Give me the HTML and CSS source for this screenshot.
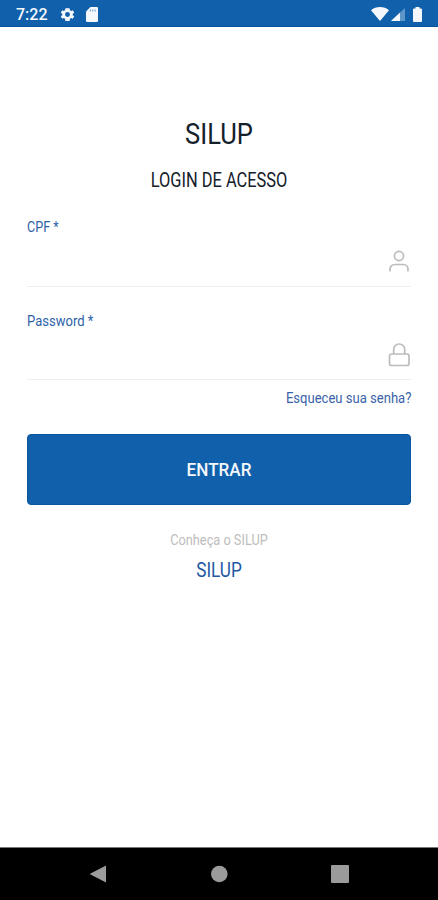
FILE: index.html
```html
<!DOCTYPE html>
<html lang="pt-BR">
<head>
  <meta charset="UTF-8">
  <meta name="viewport" content="width=device-width, initial-scale=1.0">
  <title>SILUP</title>
  <link rel="stylesheet" href="styles.css">
</head>
<body>
  <header class="status-bar">
    <span class="clock">7:22</span>
    <svg class="gear" width="17" height="17" viewBox="0 0 24 24">
      <path fill-rule="evenodd" d="M19.400 13a7.600 7.600 0 0 0 0-2l2.100-1.600-2-3.500-2.500 1a7.600 7.600 0 0 0-1.700-1L15 3H9l-.4 2.900a7.600 7.600 0 0 0-1.700 1l-2.400-1-2 3.500L4.600 11a7.600 7.600 0 0 0 0 2l-2.100 1.600 2 3.500 2.400-1a7.600 7.600 0 0 0 1.700 1L9 21h6l.4-2.900a7.600 7.600 0 0 0 1.700-1l2.400 1 2-3.500zM12 8.500a3.500 3.500 0 1 1 0 7 3.500 3.500 0 0 1 0-7z"/>
    </svg>
    <svg class="sd-card" width="12" height="15" viewBox="0 0 12 15">
      <path d="M4.500 0H11a1 1 0 0 1 1 1v13a1 1 0 0 1-1 1H1a1 1 0 0 1-1-1V4.500z"/>
      <path class="slots" d="M4.500 2.500v2M6.800 2.500v2M9.100 2.500v2"/>
    </svg>
    <div class="status-right">
      <svg width="18" height="14" viewBox="0 0 18 14"><path d="M0 3.200C5-1 13-1 18 3.200L9 14z"/></svg>
      <svg width="14" height="13" viewBox="0 0 14 13">
        <path opacity=".35" d="M14 0v13H0z"/>
        <path d="M9 4.600V13H0z"/>
      </svg>
      <svg class="battery" width="9" height="15" viewBox="0 0 9 15"><path d="M2.500 0h4v1.500H8a1 1 0 0 1 1 1V14a1 1 0 0 1-1 1H1a1 1 0 0 1-1-1V2.500a1 1 0 0 1 1-1h1.500z"/></svg>
    </div>
  </header>

  <main class="login">
    <h1 class="title">SILUP</h1>
    <h2 class="subtitle">LOGIN DE ACESSO</h2>

    <form>
      <div class="field">
        <label class="label-cpf" for="cpf">CPF *</label>
        <div class="input-row">
          <input type="text" id="cpf">
          <svg width="22" height="24" viewBox="0 0 22 24">
            <circle cx="11" cy="6" r="4.600"/>
            <path d="M2 21.500V19a4.500 4.500 0 0 1 4.500-4.500h9A4.500 4.500 0 0 1 20 19v2.500"/>
          </svg>
        </div>
      </div>
      <div class="field field-password">
        <label class="label-password" for="password">Password *</label>
        <div class="input-row">
          <input type="password" id="password">
          <svg width="22" height="24" viewBox="0 0 22 24">
            <rect x="1.500" y="11" width="19.500" height="11.500" rx="2"/>
            <path d="M5.700 11V6.500a5.500 5.500 0 0 1 11 0V11"/>
          </svg>
        </div>
      </div>
      <a class="forgot" href="#">Esqueceu sua senha?</a>
      <button class="enter" type="button"><span>ENTRAR</span></button>
    </form>

    <p class="about">Conheça o SILUP</p>
    <a class="about-link" href="#">SILUP</a>
  </main>

  <nav class="nav-bar">
    <svg width="18" height="18" viewBox="0 0 18 18"><path d="M17 .5v17L1.500 9.500q-.6-.5 0-1z"/></svg>
    <svg width="18" height="18" viewBox="0 0 18 18"><circle cx="9.300" cy="9" r="8.300"/></svg>
    <svg width="18" height="18" viewBox="0 0 18 18"><rect width="18" height="18" rx="1"/></svg>
  </nav>
</body>
</html>
```
FILE: styles.css
```css
* {
  box-sizing: border-box;
}
body {
  margin: 0;
  height: 900px;
  display: flex;
  flex-direction: column;
  background-color: #fff;
  color: #14202a;
  font-family: Roboto, sans-serif;
  overflow: hidden;
}
svg {
  display: block;
  flex-shrink: 0;
}
.status-bar {
  display: flex;
  align-items: center;
  height: 27px;
  padding: 2px 16px 0;
  background-color: #1160ab;
  border-bottom: 1px solid #0a529b;
  color: #f4f8fc;
}
.status-bar svg {
  fill: #f4f8fc;
}
.clock {
  width: 43px;
  font-size: 16px;
  font-weight: 500;
}
.sd-card {
  margin-left: 10px;
}
.sd-card .slots {
  stroke: #1160ab;
  stroke-width: 0.6;
}
.status-right {
  display: flex;
  align-items: center;
  gap: 2px;
  margin-left: auto;
}
.battery {
  margin-left: 6px;
}
.login {
  flex: 1;
  display: flex;
  flex-direction: column;
  padding: 89px 27px 0;
}
.title, .subtitle {
  font-weight: 400;
  text-align: center;
}
.title {
  margin: 0;
  font-size: 29px;
  line-height: 36px;
  transform: scaleX(0.88);
}
.subtitle {
  margin: 16px 0 0;
  font-size: 20px;
  line-height: 24px;
  transform: scaleX(0.82);
}
form {
  display: flex;
  flex-direction: column;
}
.field {
  margin-top: 25px;
  border-bottom: 1px solid #efefef;
}
.field label {
  display: block;
  font-size: 14px;
  line-height: 20px;
  color: #2c5fa8;
  transform-origin: left;
}
.label-cpf {
  transform: scaleX(0.9);
}
.label-password {
  transform: scaleX(0.93);
}
.input-row {
  display: flex;
  align-items: center;
  height: 49px;
}
.input-row input {
  flex: 1;
  min-width: 0;
  border: none;
  outline: none;
  background: none;
}
.input-row svg {
  margin-right: 1px;
  fill: none;
  stroke: #bcbcbc;
  stroke-width: 1.7;
}
.field-password {
  margin-top: 24px;
}
.field-password .input-row {
  height: 48px;
}
.forgot {
  align-self: flex-end;
  margin-top: 9px;
  font-size: 14.500px;
  line-height: 20px;
  color: #3a62a8;
  text-decoration: none;
  transform: scaleX(0.9);
  transform-origin: right;
}
.enter {
  height: 71px;
  margin-top: 25px;
  padding: 0;
  background-color: #1160ab;
  border: 1px solid #0a559f;
  border-radius: 4px;
  color: #f4f8fc;
  font-family: inherit;
  font-size: 19px;
  font-weight: 500;
}
.enter span {
  display: inline-block;
  transform: scaleX(0.9);
}
.about {
  margin: 26px 0 0;
  font-size: 14.500px;
  line-height: 20px;
  color: #bdbdbd;
  text-align: center;
  transform: scaleX(0.88);
}
.about-link {
  margin-top: 8px;
  font-size: 19.500px;
  line-height: 24px;
  color: #2358a5;
  text-align: center;
  text-decoration: none;
  transform: scaleX(0.88);
}
.nav-bar {
  display: flex;
  align-items: center;
  justify-content: space-between;
  height: 53px;
  padding: 0 89px;
  border-top: 1px solid #777;
  background-color: #000;
}
.nav-bar svg {
  fill: #9b9b9b;
}
```
